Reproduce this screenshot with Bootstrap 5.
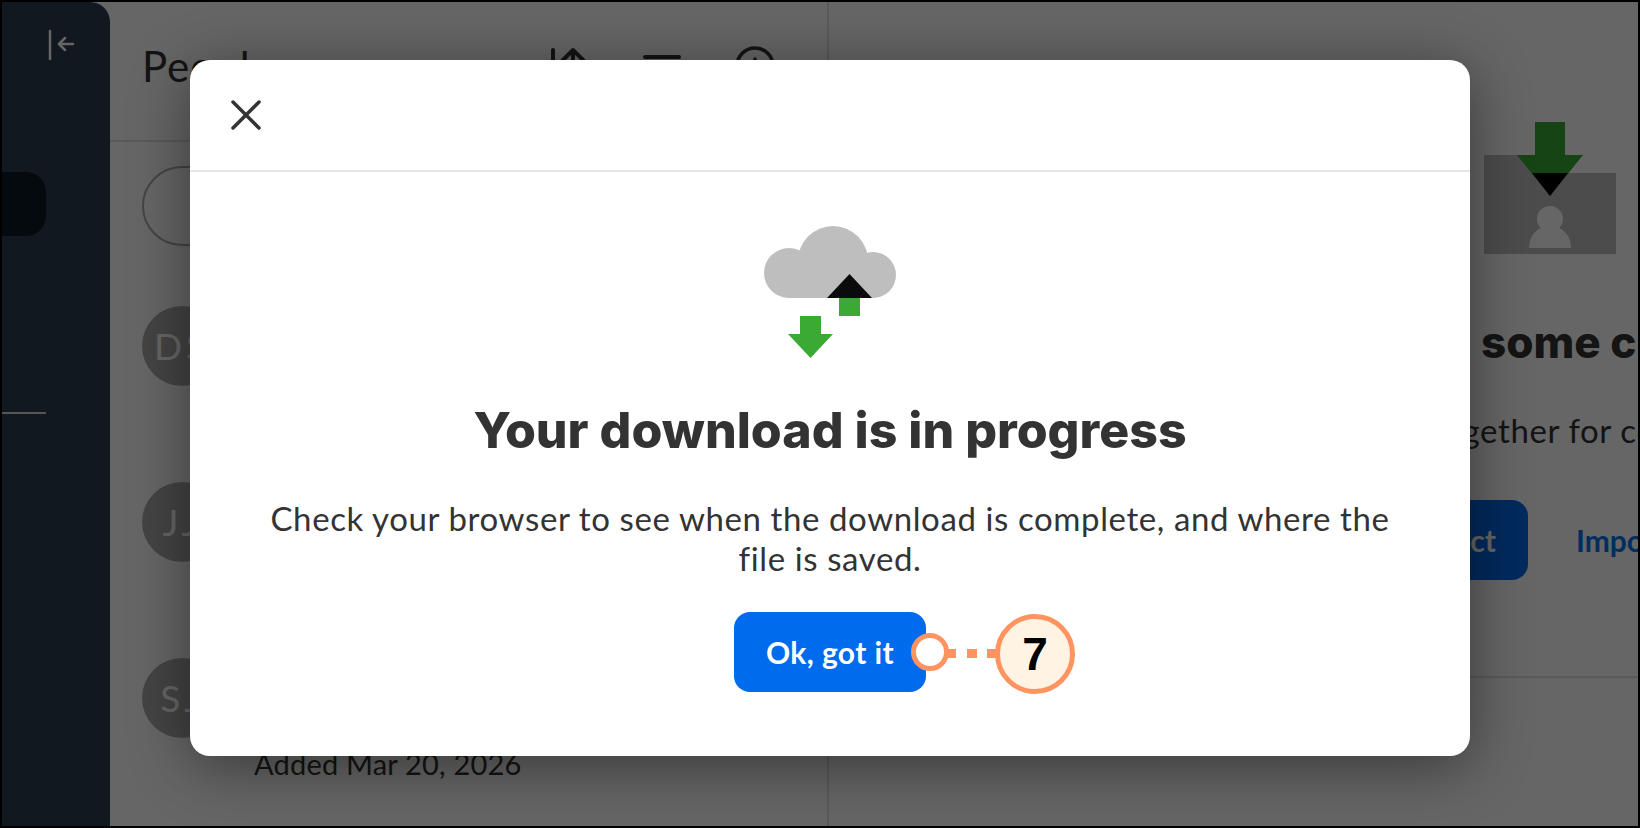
<!DOCTYPE html>
<html lang="en">
<head>
  <meta charset="UTF-8">
  <meta name="viewport" content="width=device-width, initial-scale=1.0">
  <title>Download in progress</title>
  <link href="https://cdn.jsdelivr.net/npm/bootstrap@5.3.0/dist/css/bootstrap.min.css" rel="stylesheet">
  <style>
    body { font-family: "Lato", sans-serif; color: #333; overflow: hidden; height: 828px; }

    /* page behind the dialog */
    .app-frame { height: 828px; border: 2px solid #000; position: relative; overflow: hidden; background: #fff; }
    .side-rail { width: 108px; flex: none; background: #2b3c51; border-top-right-radius: 20px; }
    .rail-toggle { padding: 27px 0 0 46px; height: 170px; }
    .rail-pill { width: 44px; height: 64px; background: #0c1a21; border-radius: 0 20px 20px 0; }
    .rail-rule { width: 44px; height: 2px; background: #d8d8d8; margin-top: 176px; }

    .people-pane { width: 719px; flex: none; border-right: 2px solid #e2e2e2; }
    .people-head { height: 140px; padding: 44px 52px 0 32px; border-bottom: 2px solid #dedede; }
    .people-title { font-size: 42px; line-height: 40px; letter-spacing: 1px; margin: 0; font-weight: 400; }
    .people-tools { gap: 53px; }
    .search-pill { width: 600px; height: 80px; margin: 24px 0 0 32px; border: 2px solid #aaa; border-radius: 40px; }
    .person-row { margin-left: 32px; gap: 32px; }
    .person-row + .person-row { margin-top: 96px; }
    .first-person { margin-top: 60px; }
    .avatar-dot { width: 80px; height: 80px; border-radius: 50%; background: #aaa; color: #fff; font-size: 37px; letter-spacing: 4px; flex: none; }
    .added-line { margin: 9px 0 0 144px; font-size: 29px; line-height: 34px; letter-spacing: .2px; }

    .empty-pane { min-width: 0; }
    .empty-art { padding: 120px 0 0 655px; }
    .empty-heading { font-family: "Inter", sans-serif; font-weight: 800; font-size: 44px; line-height: 56px; margin: 60px 0 0 652px; white-space: nowrap; color: #333; }
    .empty-copy { font-size: 33px; line-height: 40px; letter-spacing: .6px; margin: 40px 0 0 602px; white-space: nowrap; }
    .empty-actions { margin: 50px 0 0 508px; gap: 48px; white-space: nowrap; font-size: 30px; font-weight: 700; }
    .add-btn { width: 191px; height: 80px; background: #0069ec; color: #fff; border-radius: 16px; padding-right: 32px; }
    .import-link { color: #0a6fee; }
    .pane-rule { height: 2px; background: #e2e2e2; margin-top: 96px; }

    .dim-layer { position: absolute; inset: 0; background: rgba(0, 0, 0, .6); }

    /* dialog */
    .download-dialog { position: absolute; left: 188px; top: 58px; width: 1280px; height: 696px; background: #fff; border: 0; border-radius: 20px; box-shadow: 0 10px 60px rgba(0, 0, 0, .45); }
    .download-dialog .modal-header { height: 112px; padding: 0 0 0 36px; border-bottom: 2px solid #e5e5e5; }
    .close-x { width: 40px; height: 40px; border: 0; background: none; padding: 0; }
    .download-dialog .modal-body { padding: 54px 0 0; }
    .dialog-title { font-family: "Inter", sans-serif; font-weight: 800; font-size: 50px; line-height: 60px; margin: 42px 0 0; color: #333; }
    .dialog-copy { width: 1140px; font-size: 33px; line-height: 40px; letter-spacing: .6px; margin: 38px 0 0; text-align: center; color: #333; }
    .got-it { width: 192px; height: 80px; margin-top: 34px; background: #006bed; color: #fff; border: 0; border-radius: 16px; font-size: 30px; font-weight: 700; letter-spacing: .4px; padding: 0; }

    /* numbered callout */
    .callout-wrap { position: relative; }
    .callout-ring { position: absolute; left: 177px; top: 55px; width: 38px; height: 38px; border-radius: 50%; background: #fff; border: 5px solid #ff9460; }
    .callout-dash { position: absolute; top: 71px; height: 9px; background: #ff9460; }
    .callout-num { position: absolute; left: 261px; top: 36px; width: 80px; height: 80px; border-radius: 50%; background: #fff3e3; border: 5px solid #ff9460; color: #000; font-family: "Liberation Sans", sans-serif; font-weight: 700; font-size: 46px; line-height: 70px; text-align: center; }
  </style>
</head>
<body>
  <div class="app-frame d-flex">
    <aside class="side-rail">
      <div class="rail-toggle">
        <svg width="28" height="32" viewBox="0 0 28 32" fill="none" stroke="#fff" stroke-width="2.5" stroke-linecap="round" stroke-linejoin="round">
          <path d="M2 2v28"/><path d="M25 15H11"/><path d="M17 9l-6 6 6 6"/>
        </svg>
      </div>
      <div class="rail-pill"></div>
      <div class="rail-rule"></div>
    </aside>

    <section class="people-pane">
      <div class="people-head d-flex justify-content-between align-items-start">
        <h1 class="people-title">People</h1>
        <div class="people-tools d-flex">
          <svg width="40" height="40" viewBox="0 0 40 40" fill="none" stroke="#333" stroke-width="4" stroke-linecap="round" stroke-linejoin="round">
            <path d="M4 4v34"/><path d="M24 6v32"/><path d="M13 15l11-11 11 11"/>
          </svg>
          <svg width="40" height="40" viewBox="0 0 40 40" fill="none" stroke="#333" stroke-width="4" stroke-linecap="round">
            <path d="M3 11h34"/><path d="M9 21h22"/><path d="M15 31h10"/>
          </svg>
          <svg width="40" height="40" viewBox="0 0 40 40" fill="none" stroke="#333" stroke-width="3.5" stroke-linecap="round">
            <circle cx="20" cy="20" r="18"/><path d="M20 13v.5"/><path d="M20 19v10"/>
          </svg>
        </div>
      </div>
      <div class="search-pill"></div>
      <div class="person-row first-person d-flex align-items-center">
        <div class="avatar-dot d-flex align-items-center justify-content-center">DS</div>
      </div>
      <div class="person-row d-flex align-items-center">
        <div class="avatar-dot d-flex align-items-center justify-content-center">JJ</div>
      </div>
      <div class="person-row d-flex align-items-center">
        <div class="avatar-dot d-flex align-items-center justify-content-center">SJ</div>
      </div>
      <div class="added-line">Added Mar 20, 2026</div>
    </section>

    <section class="empty-pane flex-grow-1">
      <div class="empty-art">
        <svg width="132" height="132" viewBox="0 0 132 132">
          <path d="M0 33h132v99H0z" fill="#bebebe"/>
          <path d="M66 51h66V33H66z" fill="#fff"/>
          <path d="M51 0h30v33h18L66 74 33 33h18z" fill="#3aaa35"/>
          <path d="M48 51h36L66 74z" fill="#000"/>
          <circle cx="66" cy="97" r="13" fill="#fff"/>
          <path d="M45 126c0-13 9-22 21-22s21 9 21 22z" fill="#fff"/>
        </svg>
      </div>
      <h2 class="empty-heading">some contacts</h2>
      <p class="empty-copy">together for collaboration</p>
      <div class="empty-actions d-flex align-items-center">
        <div class="add-btn d-flex align-items-center justify-content-end">Add contact</div>
        <div class="import-link">Import</div>
      </div>
      <div class="pane-rule"></div>
    </section>

    <div class="dim-layer"></div>

    <div class="modal-content download-dialog">
      <div class="modal-header">
        <button class="close-x" type="button" aria-label="Close">
          <svg width="40" height="40" viewBox="0 0 40 40" fill="none" stroke="#333" stroke-width="3.5" stroke-linecap="round">
            <path d="M7 7l26 26"/><path d="M33 7L7 33"/>
          </svg>
        </button>
      </div>
      <div class="modal-body d-flex flex-column align-items-center">
        <svg width="132" height="132" viewBox="0 0 132 132">
          <g fill="#bebebe">
            <circle cx="25" cy="47" r="25"/>
            <circle cx="69" cy="35" r="35"/>
            <circle cx="109" cy="49" r="23"/>
            <rect x="25" y="40" width="84" height="32"/>
          </g>
          <path d="M85.500 48L108 72H63z" fill="#0a0b0c"/>
          <rect x="75" y="72" width="21" height="18" fill="#3aaa35"/>
          <path d="M36 90h21v18h12l-22.500 24L24 108h12z" fill="#3aaa35"/>
        </svg>
        <h2 class="dialog-title">Your download is in progress</h2>
        <p class="dialog-copy">Check your browser to see when the download is complete, and where the file is saved.</p>
        <div class="callout-wrap">
          <button class="got-it" type="button">Ok, got it</button>
          <span class="callout-ring"></span>
          <span class="callout-dash" style="left:214px;width:8px"></span>
          <span class="callout-dash" style="left:233px;width:10px"></span>
          <span class="callout-dash" style="left:253px;width:10px"></span>
          <span class="callout-num">7</span>
        </div>
      </div>
    </div>
  </div>

  <script src="https://cdn.jsdelivr.net/npm/bootstrap@5.3.0/dist/js/bootstrap.bundle.min.js"></script>
</body>
</html>
